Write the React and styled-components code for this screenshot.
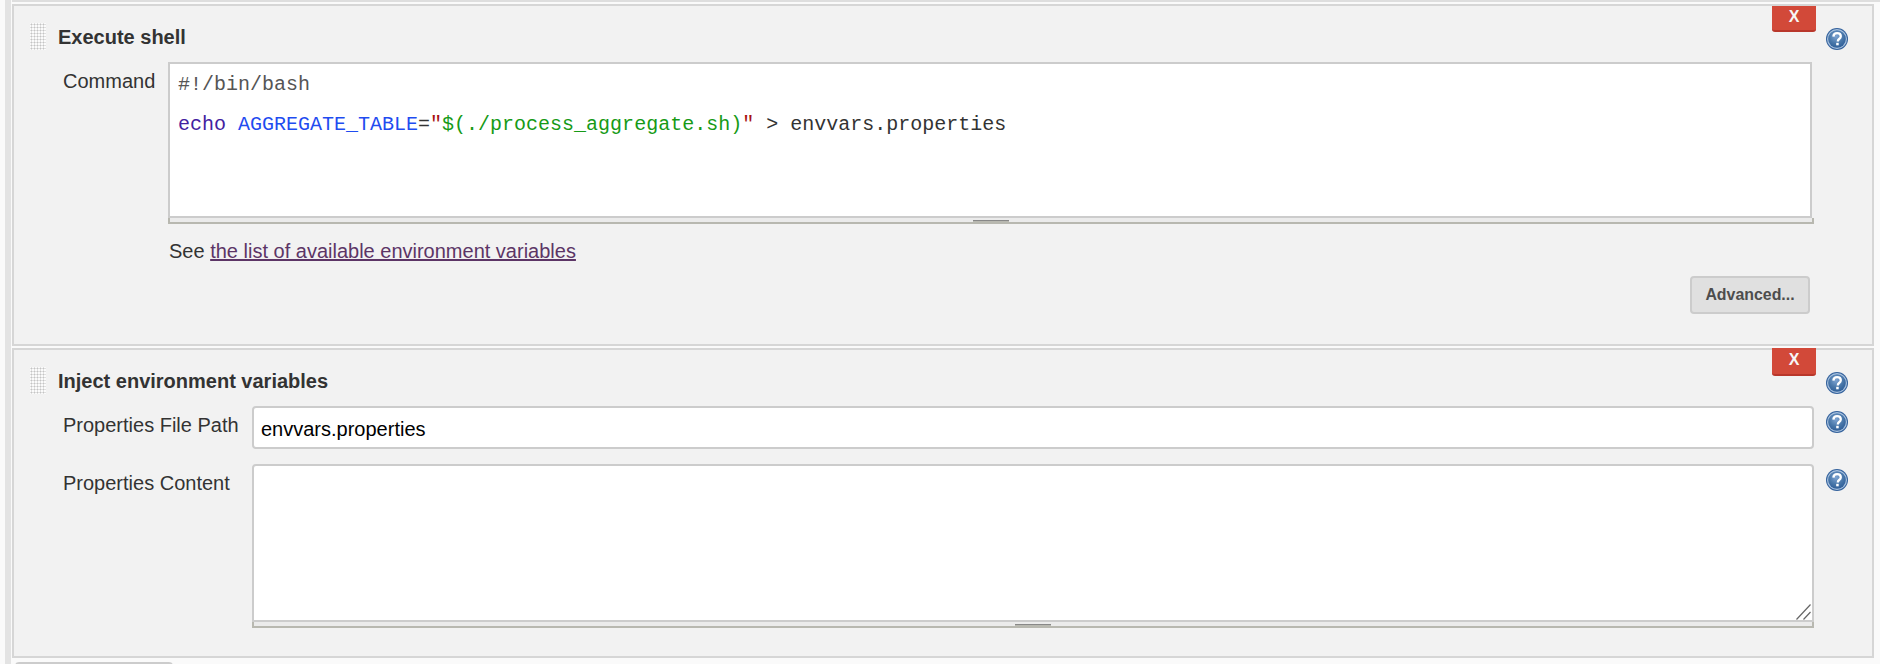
import { useId } from "react"
import styled, { createGlobalStyle } from "styled-components"

const GlobalStyle = createGlobalStyle`
  html, body {
    margin: 0;
    height: 664px;
    overflow: hidden;
    background: #fafafa;
    font-family: "Liberation Sans", Arial, sans-serif;
    font-size: 20px;
    color: #333;
  }
`

const HelpIcon = () => {
  const id = useId()
  return (
    <HelpSvg viewBox="0 0 22 22">
      <defs>
        <radialGradient id={id} cx="45%" cy="35%" r="70%">
          <stop offset="0%" stopColor="#7ea4d2" />
          <stop offset="55%" stopColor="#4a78aa" />
          <stop offset="100%" stopColor="#2b5b96" />
        </radialGradient>
      </defs>
      <circle cx="11" cy="11" r="11" fill="#33619c" />
      <circle cx="11" cy="11" r="10" fill="#a9c2df" />
      <circle cx="11" cy="11" r="8.8" fill={`url(#${id})`} />
      <path
        d="M7.4 8.6c.1-2.2 1.6-3.5 3.7-3.5 2.2 0 3.7 1.3 3.7 3.1 0 1.4-.8 2.1-1.7 2.8-.9.7-1.3 1.2-1.3 2.4"
        fill="none"
        stroke="#fff"
        strokeWidth="2.3"
      />
      <rect x="10.2" y="14.8" width="2.5" height="2.5" fill="#fff" />
    </HelpSvg>
  )
}

const BuildStep = ({ title, top, height, children }) => (
  <Panel>
    <DeleteButton $top={top} $height={height}>X</DeleteButton>
    <Header>
      <Grip />
      <Title>{title}</Title>
      <HelpIcon />
    </Header>
    {children}
  </Panel>
)

const App = () => {
  return (
    <>
      <GlobalStyle />
      <Page>
        <TopStrip />
        <BuildStep title="Execute shell" top={0} height={26}>
          <Field $label={105}>
            <Label>Command</Label>
            <div>
              <Editor>
                <Line $color="#555">#!/bin/bash</Line>
                <Line />
                <Line>
                  <Code $color="#43219f">echo</Code>{" "}
                  <Code $color="#1f4cf0">AGGREGATE_TABLE</Code>=
                  <Code $color="#a81111">"</Code>
                  <Code $color="#169a16">$(./process_aggregate.sh)</Code>
                  <Code $color="#a81111">"</Code> {">"} envvars.properties
                </Line>
              </Editor>
              <Grippie />
            </div>
          </Field>
          <Note>
            See <a href="/" onClick={event => event.preventDefault()}>the list of available environment variables</a>
          </Note>
          <Actions>
            <AdvancedButton>Advanced...</AdvancedButton>
          </Actions>
        </BuildStep>
        <BuildStep title="Inject environment variables" top={-2} height={28}>
          <Field $label={189}>
            <Label>Properties File Path</Label>
            <TextInput defaultValue="envvars.properties" />
            <HelpIcon />
          </Field>
          <Field $label={189}>
            <Label>Properties Content</Label>
            <TextAreaBox>
              <TextArea />
              <ResizeHandle viewBox="0 0 15 16">
                <path d="M0.5 15.5L14.5 0.5M7.5 15.5L14.5 8" stroke="#666" strokeWidth="1.2" fill="none" />
              </ResizeHandle>
              <Grippie />
            </TextAreaBox>
            <HelpIcon />
          </Field>
        </BuildStep>
        <AddStepButton />
      </Page>
    </>
  )
}

export default App

const Page = styled.div`
  margin-left: 5px;
  padding-left: 1px;
  border-left: 6px solid #e3e3e3;
  height: 664px;
  overflow: hidden;
`

const TopStrip = styled.div`
  height: 2px;
  margin-bottom: 2px;
  background: #dedede;
`

const Panel = styled.section`
  position: relative;
  width: 1862px;
  box-sizing: border-box;
  padding: 17px 0 28px;
  border: 2px solid #d6d6d6;
  background: #f2f2f2;

  & + & {
    margin-top: 2px;
  }
`

const DeleteButton = styled.button`
  position: absolute;
  top: ${props => props.$top}px;
  right: 56px;
  width: 44px;
  height: ${props => props.$height}px;
  padding: 0 0 2px;
  border: 0;
  border-bottom: 2px solid #b9372b;
  border-radius: 0 0 3px 3px;
  background: #d24939;
  color: #f6f6f6;
  font: bold 16px "Liberation Sans", Arial, sans-serif;
`

const Header = styled.header`
  display: flex;
  align-items: center;
  height: 27px;
  margin-bottom: 12px;
  padding: 0 24px 0 16px;
`

const Grip = styled.div`
  width: 16px;
  height: 27px;
  margin-right: 12px;
  background-color: #fbfbfb;
  background-image: radial-gradient(circle, #c4c4c4 0.9px, transparent 1.1px);
  background-size: 3px 3px;
`

const Title = styled.h3`
  flex: 1;
  margin: 0;
  padding-top: 2px;
  font-size: 20px;
  line-height: 27px;
  font-weight: bold;
  color: #333;
`

const HelpSvg = styled.svg`
  display: block;
  flex: none;
  width: 22px;
  height: 22px;
  margin-top: 5px;
  margin-left: 12px;
`

const Field = styled.div`
  display: grid;
  grid-template-columns: ${props => props.$label}px 1fr 58px;
  align-items: start;
  padding-left: 49px;

  & + & {
    margin-top: 15px;
  }
`

const Label = styled.label`
  padding-top: 8px;
  line-height: 22px;
  color: #333;
`

const Editor = styled.div`
  box-sizing: border-box;
  height: 156px;
  margin-right: 2px;
  padding: 11px 8px;
  border: 2px solid #ccc;
  background: #fff;
  font-family: "Liberation Mono", "Courier New", monospace;
  font-size: 20px;
  line-height: 20px;
  white-space: pre;
  color: #333;
`

const Line = styled.div`
  height: 20px;
  color: ${props => props.$color || "#333"};
`

const Code = styled.span`
  color: ${props => props.$color};
`

const Grippie = styled.div`
  position: relative;
  box-sizing: border-box;
  height: 6px;
  border: 2px solid #b8b8b0;
  border-top: 0;
  background: #ebebeb;

  &::after {
    content: "";
    position: absolute;
    left: 50%;
    top: 2px;
    width: 36px;
    height: 4px;
    margin-left: -18px;
    box-sizing: border-box;
    border-top: 1px solid #888;
    background: #b8b8b0;
  }
`

const Note = styled.div`
  margin-top: 14px;
  padding-left: 155px;
  line-height: 26px;
  color: #333;

  a {
    color: #5c3566;
  }
`

const Actions = styled.div`
  display: flex;
  justify-content: flex-end;
  margin-top: 12px;
  margin-bottom: 2px;
  padding-right: 62px;
`

const AdvancedButton = styled.button`
  box-sizing: border-box;
  width: 120px;
  height: 38px;
  padding: 0;
  border: 2px solid #ccc;
  border-radius: 4px;
  background: #e0e0e0;
  color: #4d4d4d;
  font: bold 15.9px "Liberation Sans", Arial, sans-serif;
`

const TextInput = styled.input`
  display: block;
  box-sizing: border-box;
  width: 100%;
  height: 43px;
  padding: 4px 7px 0;
  border: 2px solid #ccc;
  border-radius: 4px;
  outline: none;
  background: #fff;
  color: #000;
  font: 20px "Liberation Sans", Arial, sans-serif;
`

const TextAreaBox = styled.div`
  position: relative;
`

const TextArea = styled.textarea`
  display: block;
  box-sizing: border-box;
  width: 100%;
  height: 158px;
  padding: 4px 7px;
  border: 2px solid #ccc;
  border-radius: 4px 4px 0 0;
  outline: none;
  background: #fff;
  resize: none;
`

const ResizeHandle = styled.svg`
  position: absolute;
  right: 3px;
  bottom: 8px;
  width: 15px;
  height: 16px;
`

const AddStepButton = styled.button`
  display: block;
  width: 158px;
  height: 30px;
  margin: 4px 0 0 3px;
  padding: 0;
  border: 2px solid #ccc;
  border-radius: 4px;
  background: #e0e0e0;
`
